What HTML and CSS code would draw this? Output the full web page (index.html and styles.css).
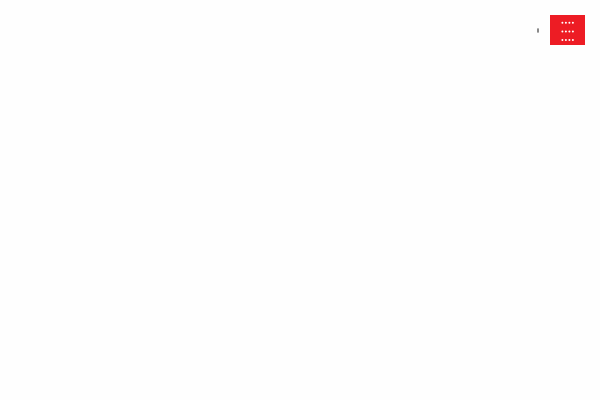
FILE: index.html
```html
<!DOCTYPE html>
<html lang="en">
<head>
<meta charset="utf-8">
<title>Menu</title>
<link rel="stylesheet" href="styles.css">
</head>
<body>
<header class="toolbar">
  <button class="more" type="button" aria-label="More">
    <svg class="more-icon" viewBox="0 0 4 6" aria-hidden="true">
      <rect x="1" y="1" width="2" height="5" fill="#b8b8b8"/>
      <rect x="1" y="2" width="2" height="3" fill="#8a8a8a"/>
    </svg>
  </button>
  <button class="menu" type="button" aria-label="Menu">
    <svg class="menu-icon" viewBox="0 0 15 22" aria-hidden="true">
      <g fill="none" stroke="#fff" stroke-width="2" stroke-linecap="round" stroke-dasharray="0 3.5">
        <path d="M2.4 3.8h10.6"/>
        <path d="M2.4 12.4h10.6"/>
        <path d="M2.4 21h10.6"/>
      </g>
    </svg>
  </button>
</header>
</body>
</html>
```
FILE: styles.css
```css
body {
  margin: 0;
  background: #fefefe;
  font-family: "Liberation Sans", Arial, sans-serif;
}

.toolbar {
  display: flex;
  justify-content: flex-end;
  align-items: center;
  gap: 10px;
  padding: 15px;
}

.toolbar button {
  display: flex;
  justify-content: center;
  align-items: center;
  border: 0;
  cursor: pointer;
}

.more {
  padding: 0;
  background: transparent;
}

.more-icon {
  width: 4px;
  height: 6px;
}

.menu {
  padding: 4px 10px;
  background: #ed1c24;
}

.menu-icon {
  width: 15px;
  height: 22px;
}
```
